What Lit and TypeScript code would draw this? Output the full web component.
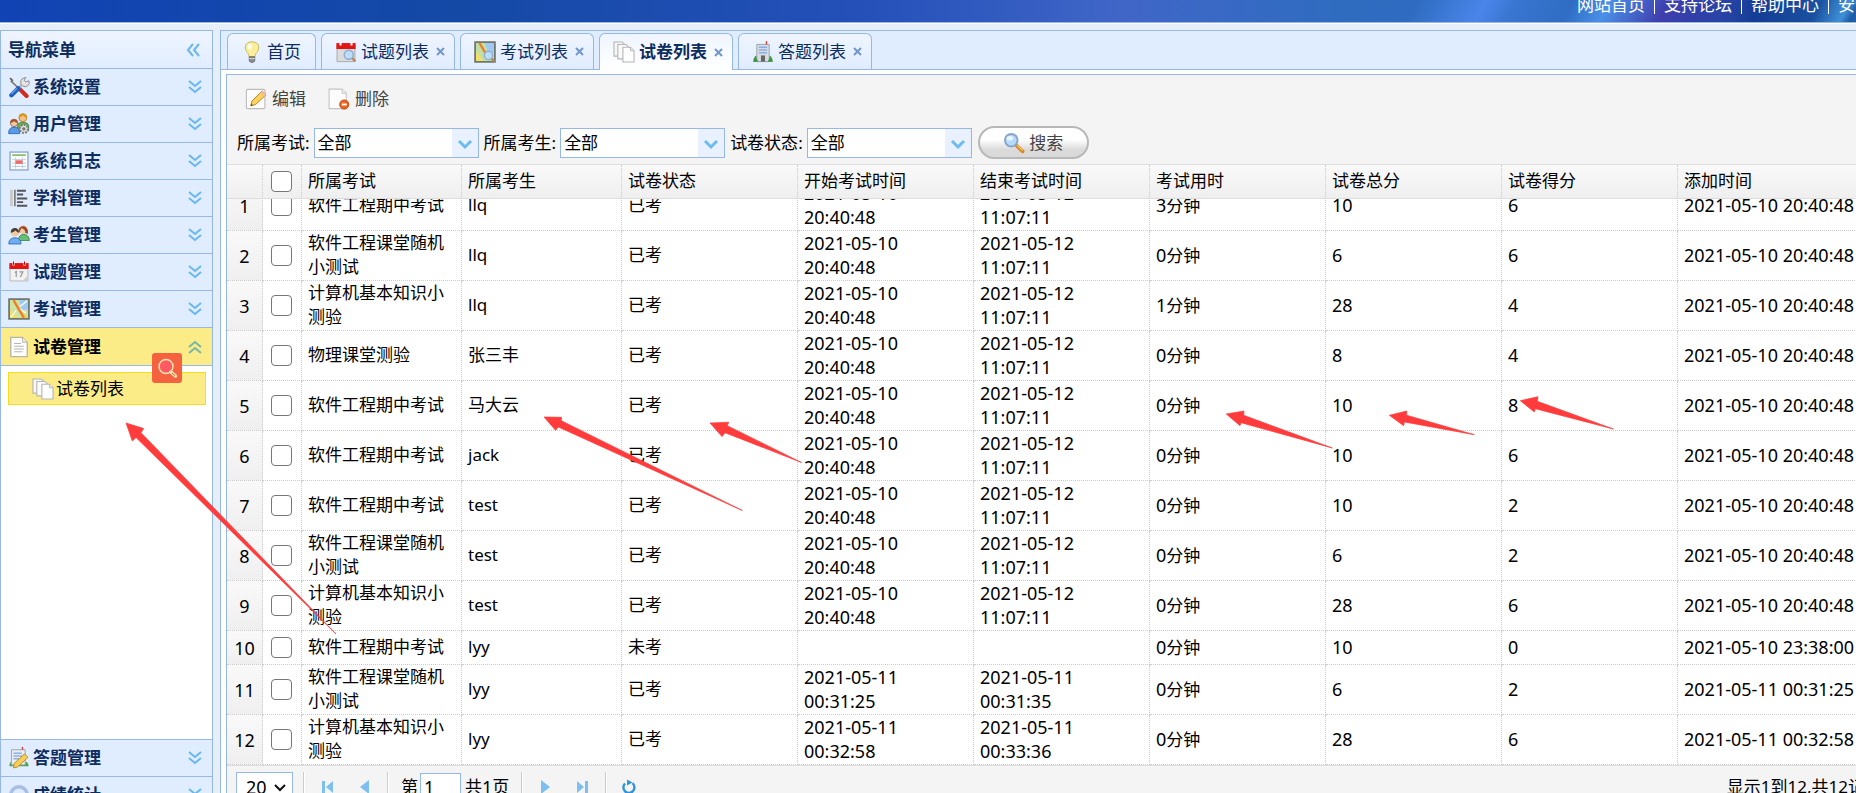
import { LitElement, html, css, svg, nothing, TemplateResult } from "lit";
import { customElement, property, query } from "lit/decorators.js";
import { classMap } from "lit/directives/class-map.js";

const art: Record<string, TemplateResult> = {
  tools: svg`<path d="M2 3.5 9 10" stroke="#777" stroke-width="1.2"/><path d="M1 1.8 2 1l2 2-1 1.2z" fill="#666"/><path d="m8 9 5.5 5.5" stroke="#d32a1e" stroke-width="3" stroke-linecap="round"/><path d="M10 6.5a3 3 0 0 1 1.5-5L13 1l-1.2 2 1 1.4 2.4-.9a3 3 0 0 1-4.6 3.6z" fill="#e4e4e4" stroke="#8b8b8b" stroke-width=".7"/><path d="m10 6.5-3 3" stroke="#bbb" stroke-width="2"/><path d="m7.5 9-5 5" stroke="#1d5fc4" stroke-width="3.2" stroke-linecap="round"/><path d="m6.5 9-4 4" stroke="#6aa6f0" stroke-width="1"/>`,
  users: svg`<circle cx="10.8" cy="3.4" r="2.9" fill="#f3c08f" stroke="#b9791f" stroke-width=".6"/><path d="M7.8 3.4a3 3 0 0 1 6 0c-2-.2-3-1.6-3-1.6s-1 1.4-3 1.6z" fill="#d99a1b"/><path d="M7 9c0-3 7.500-3 8 0v4H7z" fill="#6fb356" stroke="#437e33" stroke-width=".6"/><circle cx="4.400" cy="7.200" r="2.700" fill="#f3c9a4" stroke="#94603a" stroke-width=".6"/><path d="M1.700 7.200a2.700 2.700 0 0 1 5.400 0c-2 0-2.700-1.400-2.700-1.400s-.7 1.400-2.700 1.400z" fill="#a4522b"/><path d="M.5 14c0-5 8-5 8 0v1h-8z" fill="#5b9be6" stroke="#2c65b4" stroke-width=".6"/><circle cx="11.500" cy="11.500" r="3" fill="#ddd" stroke="#777" stroke-dasharray="1.300 1" stroke-width="1.600"/><circle cx="11.500" cy="11.500" r="1.200" fill="#777"/>`,
  log: svg`<rect x="1.500" y="1.500" width="13" height="13" fill="#fbfcff" stroke="#8fa9cf"/><path d="M3 3.700h10" stroke="#8cc06f" stroke-width="1.300"/><path d="M3 7h10M3 9.500h10M3 12h10M5.500 5.500v8M10.500 5.500v8" stroke="#bccbe2" stroke-width=".7"/><path d="M5.500 7.500h5v2.600h-5z" fill="#ee6a66"/>`,
  list: svg`<path d="M2.500 2v12" stroke="#c9c9c9" stroke-width="2"/><path d="M5 2v12" stroke="#777" stroke-width="1.200"/><path d="M6.500 2.700H13M6.500 5.500H11M6.500 8.300H14M6.500 11H11M6.500 13.600H14" stroke="#555" stroke-width="1.400"/>`,
  students: svg`<circle cx="10.800" cy="4" r="3" fill="#f5c9a2"/><path d="M7.500 7c-.8-7 7-7 7-1.500V7l-2-.5C13 4 11 3.500 9.500 3 9 5 8.500 6 7.500 7z" fill="#9a4a26"/><path d="M7.500 12c0-6 8-6 8 0z" fill="#67bd74" stroke="#3b8247" stroke-width=".6"/><circle cx="5" cy="6" r="2.900" fill="#f3c9a4"/><path d="M2 6.300C1.600 1.700 8.400 1.700 8 6.300 6.500 6 5.500 4.700 5.500 4.700S4 6 2 6.300z" fill="#4b4038"/><path d="M.6 14.500c-.3-6 9.200-6 8.800 0z" fill="#71aef0" stroke="#3572bd" stroke-width=".7"/>`,
  calendar: svg`<path d="M1.500 3h13v11.500h-13z" fill="#f2f2f2" stroke="#b7b7b7" stroke-width=".7"/><path d="M1 1.500h14v4.300H1z" fill="#e31512"/><path d="M4 .3v3M12 .3v3" stroke="#fff" stroke-width="1.500"/><path d="M4 .3v2.500M12 .3v2.500" stroke="#a00" stroke-width=".7"/><path d="m5 8.300 1-.7v4M8.300 7.900h2.500L9 11.600" fill="none" stroke="#999" stroke-width=".9"/><path d="m10.500 14.500 4-4v4z" fill="#d0d0d0"/>`,
  calendarFind: svg`<path d="M1.500 3h13v12h-13z" fill="#dcdcdc" stroke="#a9a9a9" stroke-width=".7"/><path d="M1 1.500h14v4.300H1z" fill="#e31512"/><path d="M4 .3v3M12 .3v3" stroke="#fff" stroke-width="1.500"/><circle cx="10" cy="10" r="3.300" fill="#bcdcf8" stroke="#8cacd0"/><path d="m12.500 12.500 2.300 2.300" stroke="#b98964" stroke-width="1.800"/>`,
  map: svg`<path d="M.8.8h14.400v14.400H.8z" fill="#cfe3a4" stroke="#70776b" stroke-width="1.300"/><path d="M8 1.500h6.500v7H10z" fill="#9fc8f5"/><path d="M1.500 8 7 14.500H1.500z" fill="#f1de6b"/><path d="m9.500 9 5 5.500H10z" fill="#e8d25d"/><path d="M2 14 6 9M9 6l5-4M9 8l4 3" stroke="#fff" stroke-width=".9"/><path d="m4 1.500 7.500 13" stroke="#ee7d2c" stroke-width="1.700"/>`,
  mapFind: svg`<path d="M.8.8h14.400v14.400H.8z" fill="#bfe0a4" stroke="#70776b" stroke-width="1.300"/><path d="M8 1.500h6.500v7H10z" fill="#9fc8f5"/><path d="M1.500 7 7 14.500H1.500z" fill="#f1de6b"/><path d="m4 1.500 6 10" stroke="#ee7d2c" stroke-width="1.700"/><circle cx="10.500" cy="10.500" r="3" fill="#bcdcf8" stroke="#8cacd0"/><path d="m12.800 12.800 2 2" stroke="#b98964" stroke-width="1.800"/>`,
  page: svg`<path d="M2 1h8.500L14 4.500V15H2z" fill="#fdfdfb" stroke="#b9b7a5"/><path d="M10.500 1v3.500H14" fill="#eee" stroke="#b9b7a5" stroke-width=".7"/><path d="M4.500 5.500h5M4.500 7.500h7M4.500 9.500h7M4.500 11.500h6" stroke="#b5b5b5" stroke-width=".8"/>`,
  pages: svg`<path d="M.7.700h6l2 2V11h-8z" fill="#f7f7f7" stroke="#b5b5b5" stroke-width=".8"/><path d="M3.500 2.500h6l2 2V13h-8z" fill="#fafafa" stroke="#b5b5b5" stroke-width=".8"/><path d="M7.200 4.500h5.500l2.600 2.600v8.200H7.200z" fill="#fff" stroke="#b5b5b5" stroke-width=".8"/><path d="M12.700 4.500v2.600h2.600" fill="#eee" stroke="#b5b5b5" stroke-width=".7"/>`,
  bulb: svg`<path d="M8 .6c5.800 0 5.800 5.700 3.200 8-.7.800-.9 1.700-.9 2.700H5.700c0-1-.2-1.900-.9-2.700C2.200 6.300 2.200.600 8 .6z" fill="#f8ee9c" stroke="#c8b84f" stroke-width=".7"/><ellipse cx="6.500" cy="4" rx="1.600" ry="2.200" fill="#fffde8"/><path d="M6 11.500h4v3L9 15.500H7l-1-1z" fill="#8b8b8b" stroke="#555" stroke-width=".5"/><path d="M6 12.800h4" stroke="#ddd" stroke-width=".7"/>`,
  building: svg`<path d="M1 15c.3-5 3-5.500 4-2h6c1-3.500 3.700-3 4 2z" fill="#4ba04a"/><path d="M3.500 2.500h9V15h-9z" fill="#d9dde3" stroke="#98a3b3" stroke-width=".7"/><path d="M5 4.500h6M5 6.500h6M5 8.500h6" stroke="#8ab0e2"/><path d="M6.500 10.500h3V15h-3z" fill="#666"/><path d="M1 15c.3-3.500 2-4 3.500 0zM11.500 15c1.500-4 3.200-3.500 3.500 0z" fill="#3f9640"/><path d="M10.500.1v2.400" stroke="#e23b2e"/>`,
  answer: svg`<path d="M1 14c.3-4 2-4 3-2 2-1 6-1 8 0 1-2 2.700-1 3 2z" fill="#4ba04a"/><path d="M2.500 2h10v11h-10z" fill="#e9edf3" stroke="#98a3b3" stroke-width=".7"/><path d="M4 4.500h6M4 6.500h6M4 8.500h4" stroke="#8ab0e2"/><path d="M10.500 0v2" stroke="#e23b2e"/><path d="m4.500 12 7.500-7 2.500 2.500-7.500 7-3 .7z" fill="#f8cf55" stroke="#bc8a27" stroke-width=".7"/>`,
  stats: svg`<circle cx="8" cy="8" r="6" fill="#dfeafc" stroke="#a7bfe6" stroke-width="2.500"/>`,
  edit: svg`<rect x="1" y="1" width="13.500" height="14" rx="1" fill="#fcfcfc" stroke="#bbb" stroke-width=".8"/><path d="m5 9.500 7.500-7.300 2.800 2.700L7.700 12l-3.500 1z" fill="#fbd25c" stroke="#bb7d2e" stroke-width=".7"/><path d="m12.500 2.200 2.800 2.700-1.200 1.200-2.800-2.700z" fill="#f4b9a0"/><path d="m4.200 13 .4-1.600 1.200 1.100z" fill="#444"/>`,
  remove: svg`<path d="M.8.800h9.500l3 3V15H.8z" fill="#fcfcfc" stroke="#c4c4c4" stroke-width=".8"/><path d="M10.300.800v3h3" fill="#eee" stroke="#c4c4c4" stroke-width=".7"/><circle cx="11.800" cy="12" r="3.300" fill="#ee6420" stroke="#b94a10" stroke-width=".7"/><path d="M10 12h3.600" stroke="#fff" stroke-width="1.400"/>`,
  search: svg`<path d="m9.500 9.500 4.800 4.600" stroke="#d98a1f" stroke-width="2.700" stroke-linecap="round"/><path d="m10.500 9.700 3.700 3.600" stroke="#ffd479" stroke-width=".8"/><circle cx="6" cy="6" r="4.600" fill="#b7dcfb" stroke="#8aa5c9" stroke-width="1.400"/><ellipse cx="5" cy="4.500" rx="2.300" ry="1.600" fill="#e9f6ff"/>`,
};

const icon = (name: string) =>
  html`<svg class="icon" viewBox="0 0 16 16" fill="none" aria-hidden="true">${art[name]}</svg>`;

const sharedStyles = css`
  * { box-sizing: border-box; }
  .icon { width: 22px; height: 22px; flex: none; display: block; }
  button { font: inherit; color: inherit; margin: 0; padding: 0; border: 0; background: none; cursor: pointer; }
`;

const MENU = [
  ["tools", "系统设置"], ["users", "用户管理"], ["log", "系统日志"], ["list", "学科管理"],
  ["students", "考生管理"], ["calendar", "试题管理"], ["map", "考试管理"],
  ["page", "试卷管理"], ["answer", "答题管理"], ["stats", "成绩统计"],
];

@customElement("nav-menu")
export class NavMenu extends LitElement {
  @property() selected = "试卷管理";

  static styles = [sharedStyles, css`
    :host { display: flex; flex-direction: column; border: 1px solid #95b8e7; background: #fff; color: #0e2d5f; min-height: 0; }
    .title, .head { display: flex; align-items: center; width: 100%; font-weight: 700; border-bottom: 1px solid #95b8e7; padding: 0 9px 0 7px; flex: none; }
    .title { height: 38px; background: linear-gradient(#eff5ff, #e0ecff); padding-right: 11px; }
    .head { height: 37px; background: #e0ecff; gap: 3px; }
    .head.open { height: 38px; background: #fbec88; color: #000; }
    .label { flex: 1; text-align: left; line-height: 24px; }
    .chev { width: 16px; height: 16px; stroke: #68b8ef; stroke-width: 2; fill: none; }
    .open .chev { stroke: #78b8a8; }
    .body { flex: 1; min-height: 0; border-bottom: 1px solid #95b8e7; padding: 6px 6px 0 7px; }
    .sub { display: flex; align-items: center; gap: 2px; height: 33px; padding-left: 23px; border: 1px solid #f8dc1e; background: #fbec88; color: #000; text-decoration: none; line-height: 24px; }
  `];

  private chevrons(up: boolean) {
    return html`<svg class="chev" viewBox="0 0 16 16" aria-hidden="true"><path d=${up ? "m2 8 6-5 6 5M2 14l6-5 6 5" : "m2 2 6 5 6-5M2 8l6 5 6-5"} /></svg>`;
  }

  render() {
    return html`
      <div class="title"><span class="label">导航菜单</span>
        <svg class="chev" viewBox="0 0 16 16" aria-hidden="true"><path d="M8 2 3 8l5 6M14 2 9 8l5 6" /></svg></div>
      ${MENU.map(([ic, label]) => {
        const open = label === this.selected;
        return html`
          <button class=${classMap({ head: true, open })} aria-expanded=${open} @click=${() => (this.selected = label)}>
            ${icon(ic)}<span class="label">${label}</span>${this.chevrons(open)}
          </button>
          ${open ? html`<div class="body"><a class="sub" href="#papers">${icon("pages")}试卷列表</a></div>` : nothing}`;
      })}`;
  }
}

const COLUMNS = ["所属考试", "所属考生", "试卷状态", "开始考试时间", "结束考试时间", "考试用时", "试卷总分", "试卷得分", "添加时间"];
const MID = "软件工程期中考试";
const RAND = "软件工程课堂随机小测试";
const COMP = "计算机基本知识小测验";
const T0 = "2021-05-10 20:40:48";
const T1 = "2021-05-12 11:07:11";
const ROWS = [
  [MID, "llq", "已考", T0, T1, "3", "10", "6", T0],
  [RAND, "llq", "已考", T0, T1, "0", "6", "6", T0],
  [COMP, "llq", "已考", T0, T1, "1", "28", "4", T0],
  ["物理课堂测验", "张三丰", "已考", T0, T1, "0", "8", "4", T0],
  [MID, "马大云", "已考", T0, T1, "0", "10", "8", T0],
  [MID, "jack", "已考", T0, T1, "0", "10", "6", T0],
  [MID, "test", "已考", T0, T1, "0", "10", "2", T0],
  [RAND, "test", "已考", T0, T1, "0", "6", "2", T0],
  [COMP, "test", "已考", T0, T1, "0", "28", "6", T0],
  [MID, "lyy", "未考", "", "", "0", "10", "0", "2021-05-10 23:38:00"],
  [RAND, "lyy", "已考", "2021-05-11 00:31:25", "2021-05-11 00:31:35", "0", "6", "2", "2021-05-11 00:31:25"],
  [COMP, "lyy", "已考", "2021-05-11 00:32:58", "2021-05-11 00:33:36", "0", "28", "6", "2021-05-11 00:32:58"],
];

@customElement("paper-grid")
export class PaperGrid extends LitElement {
  @query(".view") private view!: HTMLElement;

  static styles = [sharedStyles, css`
    :host { display: flex; flex-direction: column; border: 1px solid #95b8e7; background: #fff; color: #000; min-height: 0; flex: 1; }
    .tools { background: #f4f4f4; border-bottom: 1px solid #ddd; height: 90px; padding: 7px 10px 5px; display: flex; flex-direction: column; justify-content: space-between; flex: none; }
    .actions { display: flex; gap: 22px; padding-left: 8px; color: #444; }
    .actions button { display: flex; align-items: center; gap: 5px; height: 34px; line-height: 24px; }
    .filters { display: flex; align-items: center; gap: 4px; }
    label { line-height: 24px; white-space: nowrap; }
    .combo { position: relative; width: 165px; height: 30px; margin-right: 1px; }
    .combo select { width: 100%; height: 100%; appearance: none; font: inherit; color: #000; border: 1px solid #95b8e7; border-radius: 0; padding: 0 30px 0 3px; background: linear-gradient(to left, #e9f1ff 26px, #fff 26px); }
    .combo svg { position: absolute; right: 6px; top: 10px; width: 16px; height: 12px; pointer-events: none; }
    .find { display: flex; align-items: center; gap: 4px; justify-content: center; width: 111px; height: 33px; border: 2px solid #b8b8b8; border-radius: 17px; color: #444; background: linear-gradient(#fff 40%, #dadada 75%); line-height: 24px; margin-left: 1px; }
    table { table-layout: fixed; border-collapse: separate; border-spacing: 0; width: 100%; flex: none; }
    .num { width: 36px; } .tick { width: 39px; } .a { width: 160px; } .b { width: 176px; }
    th { height: 34px; font-weight: 400; text-align: left; padding: 0 6px 1px; background: linear-gradient(#f9f9f9, #efefef); border-right: 1px dotted #ccc; border-bottom: 1px solid #ddd; line-height: 24px; }
    .view { flex: 1; min-height: 0; overflow: auto; scrollbar-width: none; }
    td { height: 34px; padding: 0 6px 1px; line-height: 24px; border-right: 1px dotted #ccc; border-bottom: 1px dotted #ccc; }
    .n { font-size: 18px; }
    .rownum { padding: 0; text-align: center; background: linear-gradient(to bottom, #f9f9f9, #efefef); }
    .check { text-align: center; padding: 0 2px 0 0; }
    .check input { appearance: none; display: block; margin: 0 auto; width: 21px; height: 21px; border: 1px solid #767676; border-radius: 4px; background: #fff; }
    .check input:checked { background: #0075ff; }
    .pager { display: flex; align-items: center; height: 44px; background: #f4f4f4; border-top: 1px solid #ddd; padding: 0 17px 2px 9px; line-height: 24px; flex: none; }
    .pager select { appearance: none; width: 57px; height: 30px; font: inherit; font-size: 18px; border: 1px solid #95b8e7; padding: 0 0 0 9px; background: #fff; color: #000; }
    .size { position: relative; display: flex; margin-right: 7px; }
    .size svg { position: absolute; right: 7px; top: 11px; width: 12px; height: 9px; pointer-events: none; }
    .sep { width: 2px; height: 30px; border-left: 1px solid #ccc; border-right: 1px solid #fff; margin: 0 3px; }
    .pg { width: 38px; height: 26px; display: grid; place-items: center; }
    .pg svg { width: 16px; height: 16px; }
    .pager input { width: 41px; height: 28px; font: inherit; font-size: 18px; border: 1px solid #95b8e7; padding: 0 3px; margin: 0 4px 0 2px; }
    .page { display: flex; align-items: center; white-space: nowrap; padding: 0 9px; }
    .info { margin-left: auto; white-space: nowrap; }
  `];

  protected async firstUpdated() {
    await this.updateComplete;
    requestAnimationFrame(() => (this.view.scrollTop = this.view.scrollHeight));
  }

  private combo(id: string, label: string) {
    return html`<label for=${id}>${label}:</label>
      <span class="combo"><select id=${id}><option>全部</option></select>
        <svg viewBox="0 0 16 12" fill="none" aria-hidden="true"><path d="m2 3 6 6 6-6" stroke="#6cbcf0" stroke-width="3" /></svg></span>`;
  }

  private cols() {
    return html`<colgroup><col class="num" /><col class="tick" /><col class="a" /><col class="a" />
      <col class="b" /><col class="b" /><col class="b" /><col class="b" /><col class="b" /><col class="b" /><col /></colgroup>`;
  }

  private nav(label: string, shape: TemplateResult) {
    return html`<button class="pg" aria-label=${label}><svg viewBox="0 0 16 16" fill="#7cbff0" aria-hidden="true">${shape}</svg></button>`;
  }

  render() {
    return html`
      <div class="tools">
        <div class="actions"><button>${icon("edit")}编辑</button><button>${icon("remove")}删除</button></div>
        <div class="filters">
          ${this.combo("exam", "所属考试")}${this.combo("student", "所属考生")}${this.combo("state", "试卷状态")}
          <button class="find">${icon("search")}搜索</button>
        </div>
      </div>
      <table>${this.cols()}
        <thead><tr><th></th><th class="check"><input type="checkbox" aria-label="全选" /></th>${COLUMNS.map((c) => html`<th>${c}</th>`)}</tr></thead>
      </table>
      <div class="view"><table>${this.cols()}<tbody>
        ${ROWS.map((r, i) => html`<tr>
          <td class="rownum n">${i + 1}</td>
          <td class="check"><input type="checkbox" aria-label="选择第${i + 1}行" /></td>
          ${r.map((v, c) => c === 5
            ? html`<td><span class="n">${v}</span>分钟</td>`
            : html`<td class=${c > 2 ? "n" : ""}>${v}</td>`)}
        </tr>`)}
      </tbody></table></div>
      <div class="pager">
        <span class="size"><select aria-label="每页条数"><option>20</option></select>
          <svg viewBox="0 0 12 9" fill="none" aria-hidden="true"><path d="m1 2 5 5 5-5" stroke="#111" stroke-width="2" /></svg></span>
        <span class="sep"></span>
        ${this.nav("首页", svg`<path d="M3 2h3v12H3zM14 2v12L7 8z"/>`)}${this.nav("上一页", svg`<path d="M12 1v14L3 8z"/>`)}
        <span class="sep"></span>
        <span class="page"><label for="pageno">第</label><input id="pageno" .value=${"1"} />共<span class="n">1</span>页</span>
        <span class="sep"></span>
        ${this.nav("下一页", svg`<path d="M4 1v14l9-7z"/>`)}${this.nav("末页", svg`<path d="M2 2v12l7-6zM10 2h3v12h-3z"/>`)}
        <span class="sep"></span>
        ${this.nav("刷新", svg`<path d="M4 4.500a5.500 5.500 0 1 0 7.500-.3" fill="none" stroke="#2f93dd" stroke-width="2.400"/><path d="M6 .5v6l5.500-3z" fill="#2f93dd"/>`)}
        <span class="info">显示1到12,共12记录</span>
      </div>`;
  }
}

const TABS = [["bulb", "首页"], ["calendarFind", "试题列表"], ["mapFind", "考试列表"], ["pages", "试卷列表"], ["building", "答题列表"]];
const LINKS = ["网站首页", "支持论坛", "帮助中心", "安全退出"];
const ARROWS = [
  "126,423 143.700,428.500 141,432.700 336,634 136,437.500 132.300,441",
  "544,417 561.500,417.300 561.300,420.700 742.300,510.500 558.300,427 555.600,430.300",
  "710,423 728.700,422.200 727.300,425.700 801.500,462.500 725,432.700 722,436.600",
  "1226.300,414 1244,411 1243.700,415.300 1332.300,448 1241,422.700 1240,425.700",
  "1389.300,415.300 1406.700,411 1406.700,415.300 1474.300,434.700 1404.300,422 1403.700,425.700",
  "1520.300,400.700 1538,396.700 1537.300,401.300 1613.300,429 1535.300,408.700 1534.300,412",
];

@customElement("app-root")
export class AppRoot extends LitElement {
  @property() tab = "试卷列表";

  static styles = [sharedStyles, css`
    :host { display: block; position: relative; height: 100vh; overflow: hidden; font: 17px/24px "Noto Sans", "Noto Sans CJK SC", sans-serif; background: #e6eef8; }
    .shell { display: flex; flex-direction: column; width: calc(100% + 50px); height: calc(100vh + 22px); }
    .banner { display: flex; justify-content: flex-end; align-items: flex-end; height: 24px; flex: none; overflow: hidden; color: #fff; padding-bottom: 6px; border-bottom: 1px solid #fff; box-shadow: inset 0 -1px #95b8e7;
      background: linear-gradient(118deg, transparent 74%, #4a86ea 77.500%, #4a86ea66 79%, transparent 82%, #4a90e8 84%, #3f3fae 87%, #2f3fa8 89%, transparent 92%, transparent 95%, #3f90d8 96.500%, transparent 97%),
        linear-gradient(to right, #1243b4, #1449a6 24%, #2450b8 45%, #4066c8 59%, #2f6cc0 70%, #2f6cc4 86%, #143c94 92%, #2062aa 98%); }
    .banner nav { display: flex; align-items: center; }
    .banner a { color: inherit; text-decoration: none; }
    .banner a + a::before { content: ""; display: inline-block; width: 1px; height: 16px; background: #fff; margin: 0 9px; vertical-align: -3px; }
    .main { display: grid; grid-template-columns: 213px 1fr; gap: 7px; flex: 1; min-height: 0; padding-top: 6px; }
    .work { display: flex; flex-direction: column; min-width: 0; min-height: 0; border: 1px solid #95b8e7; background: #fff; }
    .tabs { display: flex; gap: 5px; background: #e0ecff; border-bottom: 1px solid #95b8e7; padding: 2px 6px 0; color: #0e2d5f; flex: none; }
    .tab { display: flex; align-items: center; height: 36px; gap: 4px; padding: 0 9px 0 13px; border: 1px solid #95b8e7; border-bottom: 0; border-radius: 6px 6px 0 0; background: linear-gradient(#eff5ff, #e0ecff); }
    .tab:first-child { padding-right: 14px; }
    .tab.on { font-weight: 700; height: 37px; margin-bottom: -1px; background: linear-gradient(#eff5ff, #fff); }
    .close { display: block; padding-left: 3px; }
    .close svg { width: 9px; height: 9px; display: block; }
    .pane { flex: 1; min-height: 0; display: flex; padding: 4px 5px; }
    .marks { position: absolute; left: 0; top: 0; width: 1856px; height: 793px; pointer-events: none; fill: #ff3b3b; stroke: #ff3b3b; stroke-width: .7px; stroke-linejoin: round; }
    .lens { position: absolute; left: 152px; top: 353px; width: 30px; height: 30px; border-radius: 3px; background: #f4623f; display: grid; place-items: center; }
    .lens svg { width: 24px; height: 24px; }
  `];

  render() {
    return html`
      <div class="shell">
        <header class="banner"><nav>${LINKS.map((l) => html`<a href="#">${l}</a>`)}</nav></header>
        <div class="main">
          <nav-menu></nav-menu>
          <div class="work">
            <div class="tabs">
              ${TABS.map(([ic, label], i) => html`
                <div class=${classMap({ tab: true, on: label === this.tab })}>
                  ${icon(ic)}<button @click=${() => (this.tab = label)}>${label}</button>
                  ${i ? html`<button class="close" aria-label="关闭"><svg viewBox="0 0 9 9" aria-hidden="true"><path d="m1 1 7 7M8 1 1 8" stroke="#7296cc" stroke-width="2" /></svg></button>` : nothing}
                </div>`)}
            </div>
            <div class="pane"><paper-grid></paper-grid></div>
          </div>
        </div>
      </div>
      <button class="lens" aria-label="搜索"><svg viewBox="0 0 24 24" fill="none" stroke="#ffe3b0" stroke-width="1.500" aria-hidden="true"><circle cx="11" cy="10.500" r="7" fill="#ff5a62" /><path d="m16 16 4.500 4" stroke-width="3.500" stroke-linecap="round"/><path d="m17 17 3 2.700" stroke="#f4623f" stroke-width="1"/></svg></button>
      <svg class="marks" viewBox="0 0 1856 793" aria-hidden="true">${ARROWS.map((p) => svg`<polygon points=${p} />`)}</svg>`;
  }
}
